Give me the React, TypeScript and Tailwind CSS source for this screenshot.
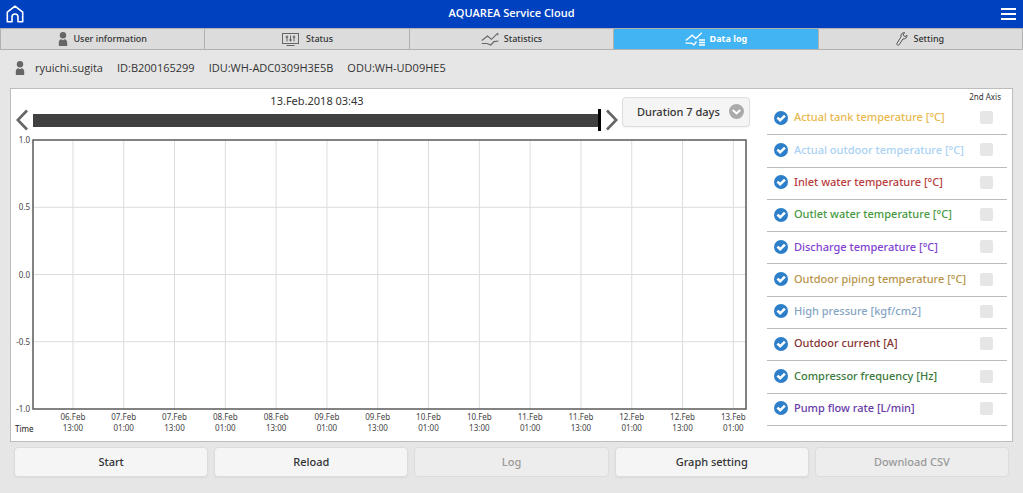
import { useState, type ReactNode } from 'react';
import { clsx } from 'clsx';

interface Tab {
  label: string;
  icon: ReactNode;
}

interface Series {
  label: string;
  color: string;
}

const PersonIcon = () => (
  <svg width="10" height="14" viewBox="0 0 10 14" fill="#666" aria-hidden="true">
    <circle cx="5" cy="3.2" r="3.2" />
    <path d="M0.8 14V10.4C0.8 8.6 2 7.2 3.4 7.2L5 8.2L6.6 7.2C8 7.2 9.2 8.6 9.2 10.4V14Z" />
  </svg>
);

const StatusIcon = () => (
  <svg width="20" height="14" viewBox="0 0 20 14" fill="none" stroke="#666" aria-hidden="true">
    <rect x="1.5" y="1.5" width="16" height="10" />
    <path d="M6 3.5V9.5M9.5 3.5V9.5M13 3.5V9.5M5.5 13.5H13.5" />
    <path d="M4.8 5H7.2M8.3 8H10.7M11.8 5H14.2" strokeWidth="1.4" />
  </svg>
);

const StatisticsIcon = () => (
  <svg width="18" height="14" viewBox="0 0 18 14" fill="none" stroke="#666" strokeWidth="1.1" aria-hidden="true">
    <path d="M0.8 8.5L6.5 4L10.5 7.3L16.8 1.2" />
    <path d="M0.8 11.5H6L9.8 13L13 9.6L17.4 9" />
    <path d="M16.8 1.2V3.2" />
  </svg>
);

const DataLogIcon = () => (
  <svg width="20" height="14" viewBox="0 0 20 14" fill="none" stroke="#fff" strokeWidth="1.3" aria-hidden="true">
    <path d="M0.8 8.5L7.2 3.2L10.8 6.5L16.8 0.8" />
    <path d="M0.5 11.2H6.5L9 12.8L11.5 9.5" />
    <path d="M14 8H20M14 10.5H20M14 13H20" strokeWidth="1.6" />
  </svg>
);

const WrenchIcon = () => (
  <svg width="12" height="14" viewBox="0 0 12 14" fill="none" stroke="#555" strokeLinejoin="round" aria-hidden="true">
    <path d="M8.8 0.8C6.6 0.2 4.4 2 5 4.8L0.9 11.4C0.3 12.8 2.2 14 3.2 12.7L7 6.9C9.4 7.2 11.4 5.4 11 3.2L9 4.6L7.4 3.6L7.3 2Z" />
  </svg>
);

const HomeIcon = () => (
  <svg width="18" height="18" viewBox="0 0 18 18" fill="none" stroke="#fff" strokeWidth="1.6" strokeLinejoin="round" aria-hidden="true">
    <path d="M1.3 7.2L9 1.2L16.7 7.2V16.7H12V12A3 3 0 0 0 6 12V16.7H1.3Z" />
  </svg>
);

const ChevronIcon = ({ flip = false }: { flip?: boolean }) => (
  <svg width="12" height="22" viewBox="0 0 12 22" fill="none" stroke="#666" strokeWidth="2.6" aria-hidden="true">
    <path d={flip ? 'M1 1.5L10.2 11L1 20.5' : 'M11 1.5L1.8 11L11 20.5'} />
  </svg>
);

const tabs: Tab[] = [
  { label: 'User information', icon: <PersonIcon /> },
  { label: 'Status', icon: <StatusIcon /> },
  { label: 'Statistics', icon: <StatisticsIcon /> },
  { label: 'Data log', icon: <DataLogIcon /> },
  { label: 'Setting', icon: <WrenchIcon /> },
];

const series: Series[] = [
  { label: 'Actual tank temperature [°C]', color: 'text-[#e8b84c]' },
  { label: 'Actual outdoor temperature [°C]', color: 'text-[#a9d2f5]' },
  { label: 'Inlet water temperature [°C]', color: 'text-[#b83c3c]' },
  { label: 'Outlet water temperature [°C]', color: 'text-[#479a41]' },
  { label: 'Discharge temperature [°C]', color: 'text-[#7f3fd0]' },
  { label: 'Outdoor piping temperature [°C]', color: 'text-[#b8954a]' },
  { label: 'High pressure [kgf/cm2]', color: 'text-[#86a5c4]' },
  { label: 'Outdoor current [A]', color: 'text-[#863434]' },
  { label: 'Compressor frequency [Hz]', color: 'text-[#3b7a3b]' },
  { label: 'Pump flow rate [L/min]', color: 'text-[#673aa8]' },
];

const actions = [
  { label: 'Start', disabled: false },
  { label: 'Reload', disabled: false },
  { label: 'Log', disabled: true },
  { label: 'Graph setting', disabled: false },
  { label: 'Download CSV', disabled: true },
];

const yTicks = ['1.0', '0.5', '0.0', '-0.5', '-1.0'];

const xTicks = [
  ['06.Feb', '13:00'],
  ['07.Feb', '01:00'],
  ['07.Feb', '13:00'],
  ['08.Feb', '01:00'],
  ['08.Feb', '13:00'],
  ['09.Feb', '01:00'],
  ['09.Feb', '13:00'],
  ['10.Feb', '01:00'],
  ['10.Feb', '13:00'],
  ['11.Feb', '01:00'],
  ['11.Feb', '13:00'],
  ['12.Feb', '01:00'],
  ['12.Feb', '13:00'],
  ['13.Feb', '01:00'],
];

const xPos = (i: number) => `${5.6 + i * 7.125}%`;
const yPos = (i: number) => `${i * 25}%`;

const Chart = () => (
  <svg className="block w-full h-[269px] overflow-visible" role="img" aria-label="Data log chart">
    {xTicks.map((_, i) => (
      <line key={i} x1={xPos(i)} x2={xPos(i)} y1="0" y2="100%" stroke="#dcdcdc" />
    ))}
    {yTicks.slice(1, -1).map((tick, i) => (
      <line key={tick} x1="0" x2="100%" y1={yPos(i + 1)} y2={yPos(i + 1)} stroke="#dcdcdc" />
    ))}
    <rect width="100%" height="100%" fill="none" stroke="#5a5a5a" strokeWidth="1.5" />
    <g fill="#444" fontSize="8">
      {yTicks.map((tick, i) => (
        <text key={tick} x="-3" y={yPos(i)} dy="3" textAnchor="end">
          {tick}
        </text>
      ))}
      {xTicks.map(([day, time], i) => (
        <g key={i} textAnchor="middle">
          <text x={xPos(i)} y="100%" dy="11">{day}</text>
          <text x={xPos(i)} y="100%" dy="22">{time}</text>
        </g>
      ))}
      <text x="-18" y="100%" dy="23" fill="#222">Time</text>
    </g>
  </svg>
);

const SeriesRow = ({ label, color }: Series) => (
  <li className="flex flex-1 items-center border-b border-[#bbb] pb-0.5 pl-[7px] pr-3.5">
    <label className="flex flex-1 items-center gap-1.5">
      <span className="relative flex">
        <input
          type="checkbox"
          defaultChecked
          className="peer size-3.5 appearance-none rounded-full bg-[#ccc] checked:bg-[#2c7fc8]"
        />
        <svg
          viewBox="0 0 14 14"
          fill="none"
          stroke="#fff"
          strokeWidth="2.6"
          className="pointer-events-none absolute inset-0 hidden size-3.5 peer-checked:block"
          aria-hidden="true"
        >
          <path d="M3.4 6.6L6.2 9.3L10.9 4.6" />
        </svg>
      </span>
      <span className={clsx('text-[11px] font-medium whitespace-nowrap', color)}>{label}</span>
    </label>
    <input
      type="checkbox"
      aria-label={`${label} on 2nd axis`}
      className="size-[13px] appearance-none rounded-xs bg-[#e6e6e6] checked:bg-[#2c7fc8]"
    />
  </li>
);

const App = () => {
  const [activeTab, setActiveTab] = useState('Data log');
  const [position, setPosition] = useState(100);

  return (
    <div className="min-h-screen bg-[#e6e6e6] font-['Noto_Sans',sans-serif] text-[#333]">
      <header className="flex h-7 items-center justify-between bg-[#0041c0] px-1.5 font-['Open_Sans',sans-serif]">
        <a href="#home" aria-label="Home">
          <HomeIcon />
        </a>
        <h1 className="pb-0.5 text-[11px] font-semibold text-white">AQUAREA Service Cloud</h1>
        <button type="button" aria-label="Menu" className="flex w-[18px] flex-col items-center gap-[3px]">
          <span className="h-0.5 w-[15px] bg-white" />
          <span className="h-0.5 w-[15px] bg-white" />
          <span className="h-0.5 w-[15px] bg-white" />
        </button>
      </header>

      <nav className="grid h-[22px] grid-cols-5 border-y border-l border-[#b0b0b0]">
        {tabs.map((tab) => (
          <button
            key={tab.label}
            type="button"
            onClick={() => setActiveTab(tab.label)}
            className={clsx(
              'flex items-center justify-center gap-[5px] border-r border-[#b0b0b0] text-[9px]',
              activeTab === tab.label ? 'bg-[#42b4f3] font-bold text-white' : 'bg-[#dcdcdc] font-medium'
            )}
          >
            {tab.icon}
            {tab.label}
          </button>
        ))}
      </nav>

      <div className="flex h-[38px] items-center gap-3.5 px-[15px] pb-0.5 font-['Open_Sans',sans-serif] text-[11px] font-medium">
        <span className="flex items-center gap-2.5">
          <PersonIcon />
          ryuichi.sugita
        </span>
        <span>ID:B200165299</span>
        <span>IDU:WH-ADC0309H3E5B</span>
        <span>ODU:WH-UD09HE5</span>
      </div>

      <main className="mx-2.5">
        <section className="flex gap-[17px] border border-[#bdbdbd] bg-white px-[5px]">
          <div className="flex-1">
            <div className="flex h-[51px] pt-[3px]">
              <div className="grid flex-1 grid-cols-[12px_1fr_12px] items-center gap-x-[5px] self-start">
                <span className="col-start-2 text-center text-[11px] leading-[17px]">13.Feb.2018 03:43</span>
                <button type="button" aria-label="Previous" className="col-start-1">
                  <ChevronIcon />
                </button>
                <input
                  type="range"
                  aria-label="Time position"
                  value={position}
                  onChange={(e) => setPosition(Number(e.target.value))}
                  className="h-[22px] w-full appearance-none bg-transparent [&::-webkit-slider-runnable-track]:h-[13px] [&::-webkit-slider-runnable-track]:bg-[#404040] [&::-webkit-slider-thumb]:-mt-[5px] [&::-webkit-slider-thumb]:h-[22px] [&::-webkit-slider-thumb]:w-[3px] [&::-webkit-slider-thumb]:appearance-none [&::-webkit-slider-thumb]:bg-black"
                />
                <button type="button" aria-label="Next">
                  <ChevronIcon flip />
                </button>
              </div>
              <div className="relative mt-[5px] ml-1 h-[30px] w-32 self-start">
                <select
                  aria-label="Duration"
                  className="h-full w-full appearance-none rounded-sm border border-[#ddd] bg-[#f5f5f5] pl-3.5 text-[11px] font-medium shadow-xs"
                >
                  <option>Duration 7 days</option>
                  <option>Duration 3 days</option>
                  <option>Duration 1 day</option>
                </select>
                <svg
                  viewBox="0 0 15 15"
                  fill="none"
                  className="pointer-events-none absolute top-[7px] right-1.5 size-[15px]"
                  aria-hidden="true"
                >
                  <circle cx="7.5" cy="7.5" r="7.5" fill="#aaa" />
                  <path d="M3.8 6L7.5 9.4L11.2 6" stroke="#fff" strokeWidth="2" />
                </svg>
              </div>
            </div>
            <div className="pr-1 pb-8 pl-[17px]">
              <Chart />
            </div>
          </div>

          <div className="flex w-60 flex-col pb-[15px]">
            <p className="pt-0.5 pr-1.5 text-right text-[8px] leading-3">2nd Axis</p>
            <ul className="flex flex-1 flex-col">
              {series.map((item) => (
                <SeriesRow key={item.label} {...item} />
              ))}
            </ul>
          </div>
        </section>

        <div className="grid grid-cols-5 gap-1.5 px-1 py-[5px]">
          {actions.map((action) => (
            <button
              key={action.label}
              type="button"
              disabled={action.disabled}
              className="h-[30px] rounded-sm border border-[#dcdcdc] bg-[#f5f5f5] text-[11px] font-medium shadow-xs disabled:bg-[#ededed] disabled:text-[#999] disabled:shadow-none"
            >
              {action.label}
            </button>
          ))}
        </div>
      </main>
    </div>
  );
};

export default App;
